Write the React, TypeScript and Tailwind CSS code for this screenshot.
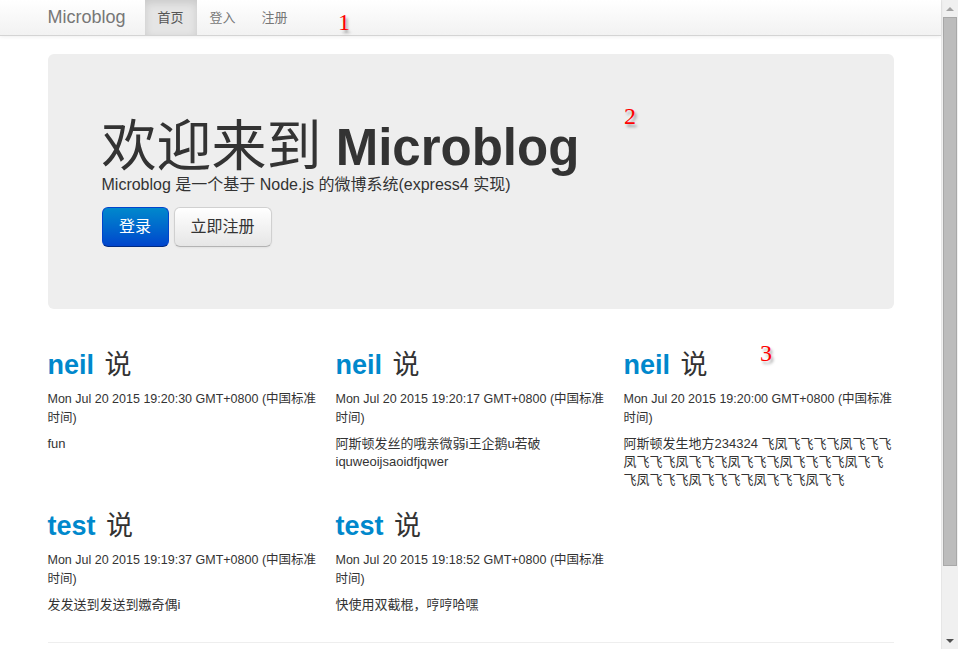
type Post = {
  user: string;
  time: string;
  text: string;
};

const posts: Post[] = [
  { user: "neil", time: "Mon Jul 20 2015 19:20:30 GMT+0800 (中国标准时间)", text: "fun" },
  {
    user: "neil",
    time: "Mon Jul 20 2015 19:20:17 GMT+0800 (中国标准时间)",
    text: "阿斯顿发丝的哦亲微弱i王企鹅u若破 iquweoijsaoidfjqwer",
  },
  {
    user: "neil",
    time: "Mon Jul 20 2015 19:20:00 GMT+0800 (中国标准时间)",
    text: "阿斯顿发生地方234324 飞凤飞飞飞飞凤飞飞飞凤飞飞飞凤飞飞飞凤飞飞飞凤飞飞飞飞凤飞飞飞凤飞飞飞凤飞飞飞飞凤飞飞飞凤飞飞",
  },
  { user: "test", time: "Mon Jul 20 2015 19:19:37 GMT+0800 (中国标准时间)", text: "发发送到发送到嫐奇偶i" },
  { user: "test", time: "Mon Jul 20 2015 19:18:52 GMT+0800 (中国标准时间)", text: "快使用双截棍，哼哼哈嘿" },
];

const Note = ({ n, className }: { n: string; className: string }) => (
  <span
    className={`absolute font-['Liberation_Serif',serif] text-[24px] leading-none text-[#ff0000] [text-shadow:2px_3px_3px_rgba(0,0,0,0.35)] ${className}`}
  >
    {n}
  </span>
);

const PostCard = ({ post }: { post: Post }) => (
  <div className="w-[270px]">
    <h2 className="text-[27px] leading-[40px] font-bold">
      <a href="#" className="text-[#0088cc]">
        {post.user}
      </a>{" "}
      <span className="ml-[3px] font-normal text-[#333]">说</span>
    </h2>
    <p className="mt-[5px] text-[12.5px] leading-[19px]">{post.time}</p>
    <p className="mt-[7px] text-[13px] leading-[18px]">{post.text}</p>
  </div>
);

const Scrollbar = () => (
  <div className="flex h-full w-[17px] flex-col bg-[#f0f0f0] border-l border-[#e6e6e6]">
    <div className="flex h-[17px] items-center justify-center">
      <div className="h-0 w-0 border-x-[4px] border-b-[4px] border-x-transparent border-b-[#a3a3a3]" />
    </div>
    <div className="mx-[1px] h-[549px] border border-[#a8a8a8] bg-[#bcbcbc]" />
    <div className="flex-1" />
    <div className="flex h-[17px] items-center justify-center">
      <div className="h-0 w-0 border-x-[4px] border-t-[4px] border-x-transparent border-t-[#505050]" />
    </div>
  </div>
);

export default function App() {
  return (
    <div className="flex h-[649px] w-[958px] overflow-hidden bg-white font-['Liberation_Sans','Noto_Sans_CJK_SC',sans-serif] text-[#333]">
      <div className="relative flex-1">
        <header className="h-[36px] border-b border-[#d4d4d4] bg-gradient-to-b from-white to-[#f2f2f2] shadow-[0_1px_4px_rgba(0,0,0,0.065)]">
          <div className="mx-auto flex h-full w-[846px] items-stretch">
            <a href="#" className="flex items-center pr-[19px] text-[18px] text-[#777]">
              Microblog
            </a>
            <nav className="flex items-stretch text-[13px]">
              <a href="#" className="flex items-center bg-[#e5e5e5] px-[13px] text-[#555] shadow-[inset_0_3px_8px_rgba(0,0,0,0.125)]">
                首页
              </a>
              <a href="#" className="flex items-center px-[13px] text-[#777]">
                登入
              </a>
              <a href="#" className="flex items-center px-[13px] text-[#777]">
                注册
              </a>
            </nav>
          </div>
        </header>

        <main className="mx-auto w-[846px]">
          <section className="mt-[18px] rounded-[6px] bg-[#eeeeee] px-[54px] pb-[62px] pt-[66px]">
            <h1 className="whitespace-nowrap text-[51px] font-bold leading-[52px] text-[#333]">
              <span className="text-[55px] font-normal">欢迎来到</span> Microblog
            </h1>
            <p className="text-[16px] leading-[22px]">Microblog 是一个基于 Node.js 的微博系统(express4 实现)</p>
            <div className="mt-[11px] flex gap-[5px]">
              <a
                href="#"
                className="rounded-[6px] border border-[#0044cc] border-b-[#002a80] bg-gradient-to-b from-[#0088cc] to-[#0044cc] px-[16.5px] py-[9px] text-[16px] leading-[20px] text-white"
              >
                登录
              </a>
              <a
                href="#"
                className="rounded-[6px] border border-[#d0d0d0] border-b-[#b3b3b3] bg-gradient-to-b from-white to-[#e6e6e6] px-[16px] py-[9px] text-[16px] leading-[20px] text-[#333] shadow-[inset_0_1px_0_rgba(255,255,255,0.2),0_1px_2px_rgba(0,0,0,0.05)]"
              >
                立即注册
              </a>
            </div>
          </section>

          <div className="mt-[36px] grid grid-cols-3 gap-x-[18px] gap-y-[17px]">
            {posts.map((p, i) => (
              <PostCard key={i} post={p} />
            ))}
          </div>

          <hr className="mt-[28px] border-t border-[#eeeeee]" />
        </main>

        <Note n="1" className="left-[338px] top-[10px]" />
        <Note n="2" className="left-[624px] top-[104px]" />
        <Note n="3" className="left-[760px] top-[341px]" />
      </div>
      <Scrollbar />
    </div>
  );
}
